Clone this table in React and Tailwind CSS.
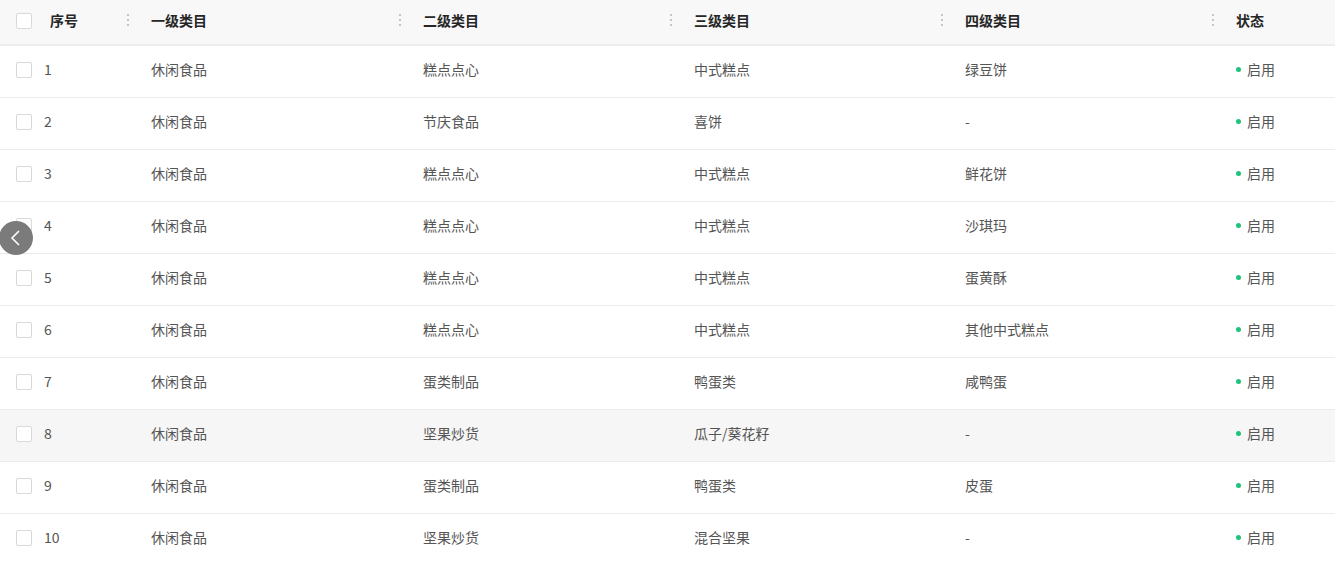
import React from "react";

const rows = [
  ["1", "休闲食品", "糕点点心", "中式糕点", "绿豆饼"],
  ["2", "休闲食品", "节庆食品", "喜饼", "-"],
  ["3", "休闲食品", "糕点点心", "中式糕点", "鲜花饼"],
  ["4", "休闲食品", "糕点点心", "中式糕点", "沙琪玛"],
  ["5", "休闲食品", "糕点点心", "中式糕点", "蛋黄酥"],
  ["6", "休闲食品", "糕点点心", "中式糕点", "其他中式糕点"],
  ["7", "休闲食品", "蛋类制品", "鸭蛋类", "咸鸭蛋"],
  ["8", "休闲食品", "坚果炒货", "瓜子/葵花籽", "-"],
  ["9", "休闲食品", "蛋类制品", "鸭蛋类", "皮蛋"],
  ["10", "休闲食品", "坚果炒货", "混合坚果", "-"],
];

const grid = "grid grid-cols-[135px_272px_271px_271px_271px_1fr]";

function Dots() {
  return (
    <div className="flex flex-col gap-[3px] mr-[6px] mt-[-5px]">
      <span className="w-[2px] h-[2px] bg-[#b5b5b5] rounded-full" />
      <span className="w-[2px] h-[2px] bg-[#b5b5b5] rounded-full" />
      <span className="w-[2px] h-[2px] bg-[#b5b5b5] rounded-full" />
    </div>
  );
}

function Box() {
  return <span className="w-[16px] h-[16px] border border-[#d9d9d9] rounded-[2px] bg-white shrink-0 mt-[-3px]" />;
}

function HeadCell({ children, dots = true }) {
  return (
    <div className="flex items-center justify-between pl-[16px]">
      <span className="leading-[20px] mt-[-5px]">{children}</span>
      {dots ? <Dots /> : null}
    </div>
  );
}

function Cell({ children }) {
  return (
    <div className="flex items-center pl-[16px]">
      <span className="leading-[20px] mt-[-5px]">{children}</span>
    </div>
  );
}

export default function App() {
  return (
    <div
      className="relative w-[1335px] h-[562px] bg-white overflow-hidden text-[14px]"
      style={{ fontFamily: '"Noto Sans CJK SC", "Noto Sans", sans-serif' }}
    >
      <div className={`${grid} h-[46px] bg-[#f8f8f8] border-b-2 border-[#ededed] font-bold text-[#262626]`}>
        <div className="flex items-center justify-between pl-[16px]">
          <div className="flex items-center">
            <Box />
            <span className="ml-[18px] leading-[20px] mt-[-5px]">序号</span>
          </div>
          <Dots />
        </div>
        <HeadCell>一级类目</HeadCell>
        <HeadCell>二级类目</HeadCell>
        <HeadCell>三级类目</HeadCell>
        <HeadCell>四级类目</HeadCell>
        <HeadCell dots={false}>状态</HeadCell>
      </div>
      {rows.map((r, i) => (
        <div
          key={i}
          className={`${grid} h-[52px] border-b border-[#ebebeb] text-[#555555] ${i === 7 ? "bg-[#f6f6f6]" : "bg-white"}`}
        >
          <div className="flex items-center pl-[16px]">
            <Box />
            <span className="ml-[12px] leading-[20px] mt-[-5px]">{r[0]}</span>
          </div>
          <Cell>{r[1]}</Cell>
          <Cell>{r[2]}</Cell>
          <Cell>{r[3]}</Cell>
          <Cell>{r[4]}</Cell>
          <div className="flex items-center pl-[16px]">
            <span className="w-[5px] h-[5px] rounded-full bg-[#1fc27a] mr-[6px] mt-[-5px]" />
            <span className="leading-[20px] mt-[-5px]">启用</span>
          </div>
        </div>
      ))}
      <button className="absolute left-[-1px] top-[221px] w-[34px] h-[34px] rounded-full bg-[#7b7b7b] flex items-center justify-center">
        <svg width="14" height="18" viewBox="0 0 14 18" fill="none">
          <path d="M10 2 L3 9 L10 16" stroke="white" strokeWidth="1.6" />
        </svg>
      </button>
    </div>
  );
}
